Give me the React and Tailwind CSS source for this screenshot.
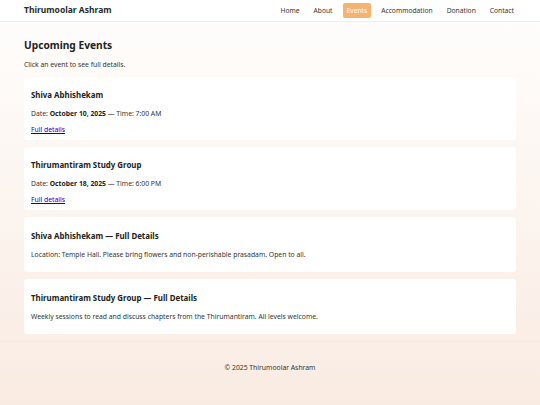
import React from 'react';

const events = [
  { id: 1, title: 'Shiva Abhishekam', date: 'October 10, 2025', time: '7:00 AM' },
  { id: 2, title: 'Thirumantiram Study Group', date: 'October 18, 2025', time: '6:00 PM' },
];

const details = [
  { id: 1, title: 'Shiva Abhishekam — Full Details', text: 'Location: Temple Hall. Please bring flowers and non-perishable prasadam. Open to all.' },
  { id: 2, title: 'Thirumantiram Study Group — Full Details', text: 'Weekly sessions to read and discuss chapters from the Thirumantiram. All levels welcome.' },
];

const nav = ['Home', 'About', 'Events', 'Accommodation', 'Donation', 'Contact'];

export default function App() {
  return (
    <div
      className="min-h-[405px] bg-gradient-to-b from-[#fffefd] to-[#f9ebe2] text-[#222]"
      style={{ fontFamily: '"Noto Sans", "Open Sans", sans-serif' }}
    >
      <header className="h-[22px] bg-white border-b border-[#f1ebe7] flex items-center justify-between px-[24px]">
        <div className="text-[8.5px] font-bold text-[#2a2a2a]">Thirumoolar Ashram</div>
        <nav className="flex items-center gap-[6px] -mr-[2px]">
          {nav.map(n => (
            <a
              key={n}
              className={
                'text-[6.7px] leading-[10px] px-[4px] py-[2.5px] rounded-[2px] ' +
                (n === 'Events' ? 'bg-[#f6b36d] text-white' : 'text-[#333]')
              }
            >
              {n}
            </a>
          ))}
        </nav>
      </header>

      <main className="px-[24px] pt-[15px]">
        <h1 className="text-[10.2px] font-bold leading-[16px] text-[#222]">Upcoming Events</h1>
        <p className="text-[6.8px] leading-[11px] mt-[6px] text-[#333]">Click an event to see full details.</p>

        <div className="flex flex-col gap-[7px] mt-[7px]">
          {events.map(e => (
            <div key={e.id} className="bg-white rounded-[3px] px-[7px] pt-[12px] pb-[5px]">
              <h2 className="text-[7.9px] font-bold leading-[13px] text-[#222]">{e.title}</h2>
              <p className="text-[6.8px] leading-[11px] mt-[6px] text-[#333]">
                Date: <b className="text-[#222]">{e.date}</b> — Time: {e.time}
              </p>
              <a className="block w-fit text-[6.8px] leading-[11px] mt-[5px] text-[#0000ee] underline">Full details</a>
            </div>
          ))}
          {details.map(d => (
            <div key={d.id} className="bg-white rounded-[3px] px-[7px] pt-[13px] pb-[12px]">
              <h2 className="text-[7.9px] font-bold leading-[13px] text-[#222]">{d.title}</h2>
              <p className="text-[6.8px] leading-[11px] mt-[6px] text-[#333]">{d.text}</p>
            </div>
          ))}
        </div>
      </main>

      <footer className="mt-[7px] border-t border-[#f6e9e1] pt-[20px] pb-[32px] text-center">
        <p className="text-[6.8px] leading-[11px] text-[#333]">© 2025 Thirumoolar Ashram</p>
      </footer>
    </div>
  );
}
